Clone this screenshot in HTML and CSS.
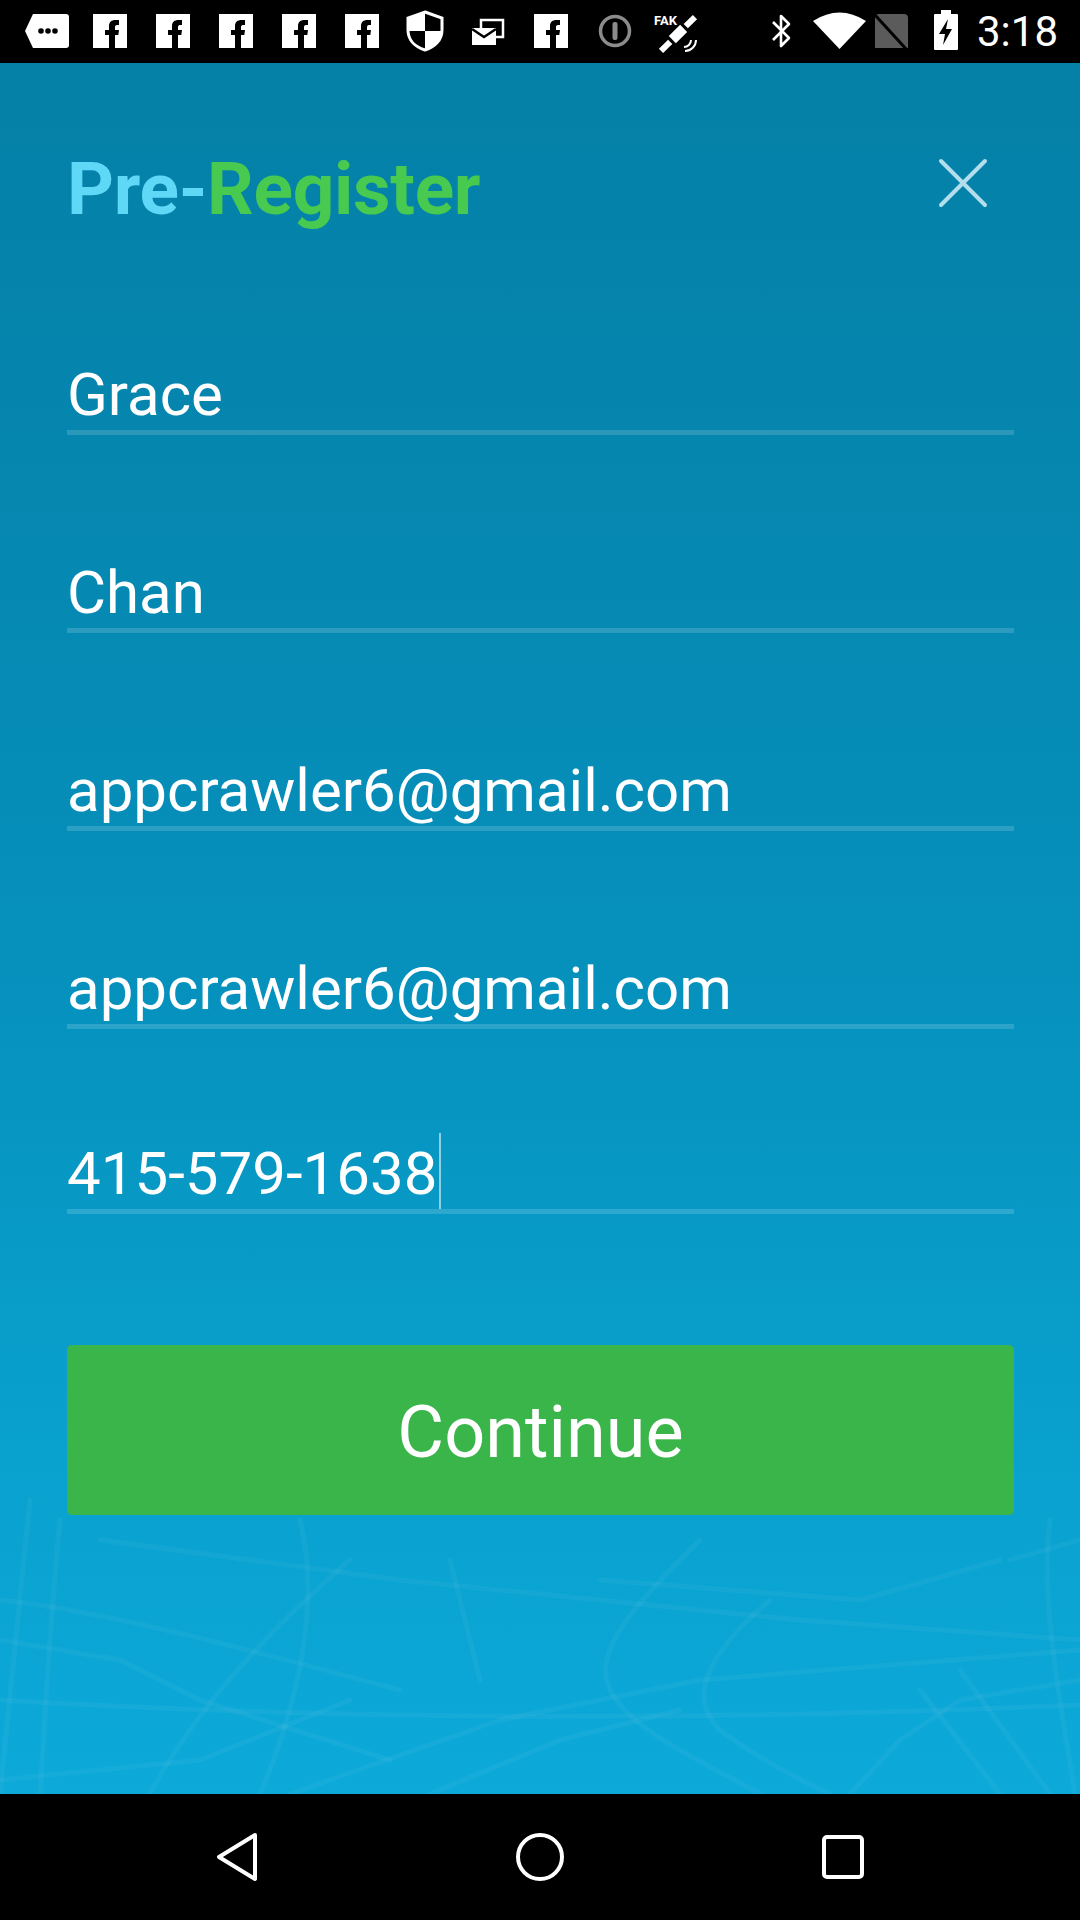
FILE: index.html
```html
<!DOCTYPE html>
<html lang="en">
<head>
<meta charset="utf-8">
<title>Pre-Register</title>
<link rel="stylesheet" href="styles.css">
</head>
<body>
<div class="phone">
  <div class="status-bar">
    <svg class="status-left" width="710" height="63" viewBox="0 0 710 63">
      <defs>
        <g id="fb">
          <rect x="0" y="14" width="34" height="34" fill="#fff"/>
          <path d="M16 48 V35 H12 V30 H16 V26 C16 22 18.5 20 22.5 20 H26 V25 H24 C22.5 25 22 26 22 27 V30 H26 L25.3 35 H22 V48 Z" fill="#000"/>
        </g>
      </defs>
      <path d="M33 14 H66 Q69 14 69 17 V45 Q69 48 66 48 H33 L25 31 Z" fill="#fff"/>
      <circle cx="41" cy="31" r="2.8" fill="#000"/>
      <circle cx="48" cy="31" r="2.8" fill="#000"/>
      <circle cx="55" cy="31" r="2.8" fill="#000"/>
      <use href="#fb" x="93"/>
      <use href="#fb" x="156"/>
      <use href="#fb" x="219"/>
      <use href="#fb" x="282"/>
      <use href="#fb" x="345"/>
      <path d="M425 12 L442 18 V30 C442 40 435 47 425 50 C415 47 408 40 408 30 V18 Z" fill="#000" stroke="#fff" stroke-width="3"/>
      <path d="M425 12 L408 18 V31 H425 Z" fill="#fff"/>
      <path d="M425 31 H442 C441 40 435 47 425 50 Z" fill="#fff"/>
      <rect x="481" y="20" width="22" height="17" fill="none" stroke="#fff" stroke-width="2.5"/>
      <rect x="472" y="28" width="24" height="17" fill="#fff"/>
      <path d="M472 29 L484 37 L496 29" fill="none" stroke="#000" stroke-width="2.5"/>
      <use href="#fb" x="534"/>
      <circle cx="615" cy="31" r="14.5" fill="none" stroke="#8c8c8c" stroke-width="3.5"/>
      <rect x="612.5" y="22" width="5" height="18" rx="2" fill="#8c8c8c"/>
      <text x="654" y="25" class="fake">FAK</text>
      <g transform="rotate(-45 678 34)">
        <rect x="670" y="29" width="16" height="10" fill="#fff"/>
        <rect x="654" y="31" width="13" height="6" fill="#fff"/>
        <rect x="689" y="31" width="13" height="6" fill="#fff"/>
      </g>
      <path d="M684 47 A7 7 0 0 0 691 40" fill="none" stroke="#fff" stroke-width="2"/>
      <path d="M685 51 A11 11 0 0 0 696 40" fill="none" stroke="#fff" stroke-width="2"/>
    </svg>
    <div class="status-right">
      <svg width="200" height="63" viewBox="762 0 200 63">
        <polyline points="772,22 788,38 780,46 780,16 788,24 772,40" fill="none" stroke="#fff" stroke-width="2.6" stroke-linejoin="round"/>
        <path d="M812 21 Q838.5 4 865 21 L838.5 49 Z" fill="#fff"/>
        <path d="M878 14 H903 Q907 14 907 18 V48 H874 V18 Q874 14 878 14 Z" fill="#5b5b5b"/>
        <path d="M874 15 L906 50" stroke="#000" stroke-width="3"/>
        <rect x="940" y="10" width="10" height="5" fill="#fff"/>
        <rect x="933" y="14" width="24" height="36" rx="1" fill="#fff"/>
        <path d="M947 19 L938 34 H944 L942 45 L951 29 H945 Z" fill="#000"/>
      </svg>
      <span class="clock">3:18</span>
    </div>
  </div>

  <main class="screen">
    <svg class="map" viewBox="0 63 1080 1731" preserveAspectRatio="none">
      <g class="roads">
        <path d="M0 1600 C100 1610 250 1650 400 1690"/>
        <path d="M0 1700 Q500 1730 1080 1705"/>
        <path d="M700 1540 C640 1600 590 1650 610 1690 C630 1730 700 1760 760 1794"/>
        <path d="M770 1600 C700 1660 690 1700 720 1730 C760 1760 800 1780 830 1794"/>
        <path d="M290 1794 L500 1720 L700 1680 L1080 1650"/>
        <path d="M30 1500 C20 1600 10 1700 0 1794"/>
        <path d="M60 1520 C50 1620 45 1720 40 1794"/>
        <path d="M1050 1520 C1040 1600 1060 1700 1075 1794"/>
        <path d="M1010 1560 L1080 1540"/>
        <path d="M150 1794 C200 1700 280 1620 350 1560"/>
        <path d="M0 1780 L200 1760 L350 1700"/>
        <path d="M430 1794 L560 1740 L680 1710"/>
        <path d="M850 1794 L900 1740 L960 1700 L1080 1680"/>
        <path d="M100 1540 L400 1580 L800 1620 L1080 1640"/>
        <path d="M300 1520 C320 1600 300 1700 260 1794"/>
        <path d="M450 1560 L480 1680"/>
        <path d="M920 1690 L1000 1794"/>
        <path d="M960 1670 L1050 1794"/>
        <path d="M0 1640 L120 1660 L200 1700 L390 1760"/>
        <path d="M600 1580 L860 1600 L1000 1560"/>
      </g>
    </svg>

    <div class="content">
      <header class="header">
        <h1 class="title"><span class="title-pre">Pre-</span><span class="title-main">Register</span></h1>
        <button class="close" aria-label="Close">
          <svg width="60" height="60" viewBox="0 0 60 60">
            <path d="M8 8 L52 52 M52 8 L8 52" stroke="#b3dfec" stroke-width="4" stroke-linecap="round"/>
          </svg>
        </button>
      </header>

      <div class="fields">
        <div class="field"><span class="value">Grace</span></div>
        <div class="field"><span class="value">Chan</span></div>
        <div class="field"><span class="value">appcrawler6@gmail.com</span></div>
        <div class="field"><span class="value">appcrawler6@gmail.com</span></div>
        <div class="field field-phone"><span class="value">415-579-1638<span class="cursor"></span></span></div>
      </div>

      <button class="continue">Continue</button>
    </div>
  </main>

  <nav class="nav-bar">
    <svg class="nav-icon" width="50" height="50" viewBox="0 0 50 50">
      <path d="M43 3 L7 25 L43 47 Z" fill="none" stroke="#fff" stroke-width="4" stroke-linejoin="round"/>
    </svg>
    <svg class="nav-icon" width="50" height="50" viewBox="0 0 50 50">
      <circle cx="25" cy="25" r="22" fill="none" stroke="#fff" stroke-width="4"/>
    </svg>
    <svg class="nav-icon" width="50" height="50" viewBox="0 0 50 50">
      <rect x="6" y="5" width="38" height="40" rx="3" fill="none" stroke="#fff" stroke-width="4"/>
    </svg>
  </nav>
</div>
</body>
</html>
```

FILE: styles.css
```css
* {
  box-sizing: border-box;
}

html, body {
  margin: 0;
  padding: 0;
  background: #000;
}

body {
  font-family: Roboto, "Liberation Sans", Arial, sans-serif;
}

.phone {
  width: 1080px;
  height: 1920px;
  display: flex;
  flex-direction: column;
  overflow: hidden;
}

/* Status bar */
.status-bar {
  height: 63px;
  flex: 0 0 63px;
  background: #000;
  display: flex;
  align-items: center;
}

.status-left {
  display: block;
}

.fake {
  font-family: Roboto, "Liberation Sans", sans-serif;
  font-weight: 700;
  font-size: 13px;
  fill: #fff;
}

.status-right {
  margin-left: auto;
  display: flex;
  align-items: center;
  padding-right: 22px;
}

.status-right svg {
  display: block;
}

.clock {
  color: #fff;
  font-size: 42px;
  line-height: 63px;
  margin-left: 14px;
  letter-spacing: 0;
}

/* Main screen */
.screen {
  flex: 0 0 1731px;
  height: 1731px;
  position: relative;
  background: linear-gradient(180deg, #0580a7 0%, #0587b0 25%, #0692be 55%, #09a0cd 78%, #0ca9d9 100%);
  overflow: hidden;
}

.map {
  position: absolute;
  left: 0;
  top: 0;
  width: 1080px;
  height: 1731px;
  pointer-events: none;
}

.roads path {
  fill: none;
  stroke: rgba(255, 255, 255, 0.045);
  stroke-width: 5;
  stroke-linejoin: round;
  stroke-linecap: round;
}

.content {
  position: relative;
  padding: 82px 66px 0 67px;
}

.header {
  height: 88px;
  display: flex;
  justify-content: space-between;
  align-items: flex-start;
}

.title {
  margin: 0;
  font-size: 73px;
  line-height: 88px;
  font-weight: 700;
  letter-spacing: -0.3px;
}

.title-pre {
  color: #5fd7f6;
}

.title-main {
  color: #48ca50;
}

.close {
  margin: 8px 21px 0 0;
  padding: 0;
  border: 0;
  background: none;
  width: 60px;
  height: 60px;
}

.close svg {
  display: block;
}

/* Fields */
.fields {
  margin-top: 126px;
  display: flex;
  flex-direction: column;
  gap: 122px;
}

.field {
  height: 76px;
  padding-top: 1px;
  border-bottom: 5px solid transparent;
  border-image: linear-gradient(180deg, rgba(205, 238, 250, 0.85) 0%, rgba(205, 238, 250, 0.6) 40%, rgba(255, 255, 255, 0.15) 100%) 1;
  font-size: 60px;
  line-height: 70px;
  color: #fff;
  white-space: nowrap;
}

.field-phone {
  margin-top: -13px;
}

.value {
  position: relative;
}

.cursor {
  position: absolute;
  right: -4px;
  top: -5px;
  width: 2px;
  height: 76px;
  background: rgba(255, 255, 255, 0.55);
}

/* Button */
.continue {
  display: block;
  width: 947px;
  height: 170px;
  margin-top: 131px;
  padding: 6px 0 0;
  border: 0;
  border-radius: 5px;
  background: #3ab54a;
  color: #fff;
  font-family: Roboto, "Liberation Sans", Arial, sans-serif;
  font-size: 72px;
  line-height: 164px;
  text-align: center;
}

/* Nav bar */
.nav-bar {
  flex: 0 0 126px;
  height: 126px;
  background: #000;
  display: grid;
  grid-template-columns: repeat(3, 303px);
  justify-content: center;
  align-items: center;
  justify-items: center;
}

.nav-icon {
  display: block;
}
```
